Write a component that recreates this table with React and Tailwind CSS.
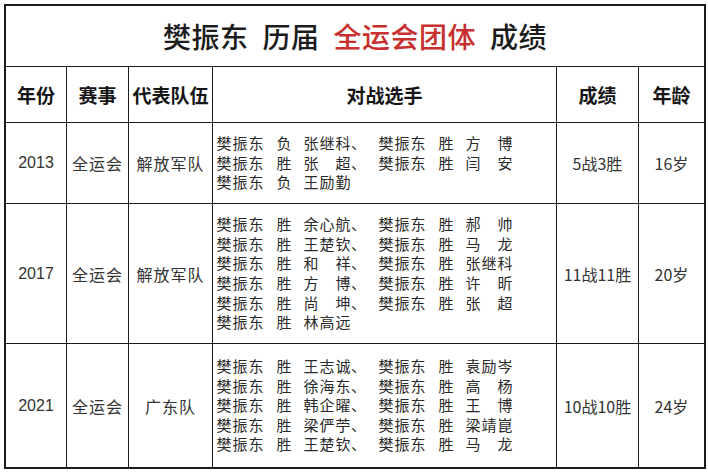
import React from "react";

const rows = [
  {
    year: "2013",
    event: "全运会",
    team: "解放军队",
    record: "5战3胜",
    age: "16岁",
    lines: [
      [["负", "张继科"], ["胜", "方博"]],
      [["胜", "张超"], ["胜", "闫安"]],
      [["负", "王励勤"]],
    ],
  },
  {
    year: "2017",
    event: "全运会",
    team: "解放军队",
    record: "11战11胜",
    age: "20岁",
    lines: [
      [["胜", "余心航"], ["胜", "郝帅"]],
      [["胜", "王楚钦"], ["胜", "马龙"]],
      [["胜", "和祥"], ["胜", "张继科"]],
      [["胜", "方博"], ["胜", "许昕"]],
      [["胜", "尚坤"], ["胜", "张超"]],
      [["胜", "林高远"]],
    ],
  },
  {
    year: "2021",
    event: "全运会",
    team: "广东队",
    record: "10战10胜",
    age: "24岁",
    lines: [
      [["胜", "王志诚"], ["胜", "袁励岑"]],
      [["胜", "徐海东"], ["胜", "高杨"]],
      [["胜", "韩企曜"], ["胜", "王博"]],
      [["胜", "梁俨苧"], ["胜", "梁靖崑"]],
      [["胜", "王楚钦"], ["胜", "马龙"]],
    ],
  },
];

const cjk = "font-['Noto_Sans_CJK_SC',sans-serif]";

const Chars = ({ text }) => (
  <span className="flex">
    {text.split("").map((c, i) => (
      <span key={i} className="w-[16px] text-center">
        {c}
      </span>
    ))}
  </span>
);

const Name = ({ name }) =>
  name.length === 2 ? (
    <span className="flex w-[48px] justify-between">
      <span className="w-[16px] text-center">{name[0]}</span>
      <span className="w-[16px] text-center">{name[1]}</span>
    </span>
  ) : (
    <Chars text={name} />
  );

const Half = ({ res, name }) => (
  <span className="flex">
    <Chars text="樊振东" />
    <span className="ml-[12px] w-[16px] text-center">{res}</span>
    <span className="ml-[11px]">
      <Name name={name} />
    </span>
  </span>
);

const Line = ({ parts }) => (
  <div className="flex h-[19.6px] items-center">
    <Half res={parts[0][0]} name={parts[0][1]} />
    {parts[1] && (
      <>
        <span className="w-[16px] text-left">、</span>
        <span className="w-[11px]" />
        <Half res={parts[1][0]} name={parts[1][1]} />
      </>
    )}
  </div>
);

const Cell = ({ children, className = "" }) => (
  <div className={"flex items-center justify-center bg-white " + className}>{children}</div>
);

export default function App() {
  return (
    <div className={"min-h-[472px] w-[708px] bg-white pl-[4px] pt-[4px] " + cjk}>
      <div className="grid w-[702px] grid-cols-[60px_61px_83px_343px_81px_65px] grid-rows-[60px_55px_80px_139px_123px] gap-px border-2 border-[#1a1a1a] bg-[#1a1a1a]">
        <Cell className="col-span-6 text-[28px] font-medium tracking-[0.5px] text-[#1c1c1c]">
          <span>樊振东</span>
          <span className="ml-[14px]">历届</span>
          <span className="ml-[14px] text-[#c7302e]">全运会团体</span>
          <span className="ml-[14px]">成绩</span>
        </Cell>
        {["年份", "赛事", "代表队伍", "对战选手", "成绩", "年龄"].map((h) => (
          <Cell key={h} className="pt-[2px] text-[19px] font-bold text-[#151515]">
            {h}
          </Cell>
        ))}
        {rows.map((r) => (
          <React.Fragment key={r.year}>
            <Cell className="font-['Liberation_Sans',sans-serif] text-[16px] text-[#333]">{r.year}</Cell>
            <Cell className="text-[16px] tracking-[1px] text-[#333]">{r.event}</Cell>
            <Cell className="text-[16px] tracking-[1px] text-[#333]">{r.team}</Cell>
            <div className="flex flex-col justify-center bg-white pl-[3px] text-[15px] text-[#2a2a2a]">
              {r.lines.map((l, i) => (
                <Line key={i} parts={l} />
              ))}
            </div>
            <Cell className="bg-[#fce4d6] text-[16px] text-[#333]">{r.record}</Cell>
            <Cell className="text-[16px] text-[#333]">{r.age}</Cell>
          </React.Fragment>
        ))}
      </div>
    </div>
  );
}
